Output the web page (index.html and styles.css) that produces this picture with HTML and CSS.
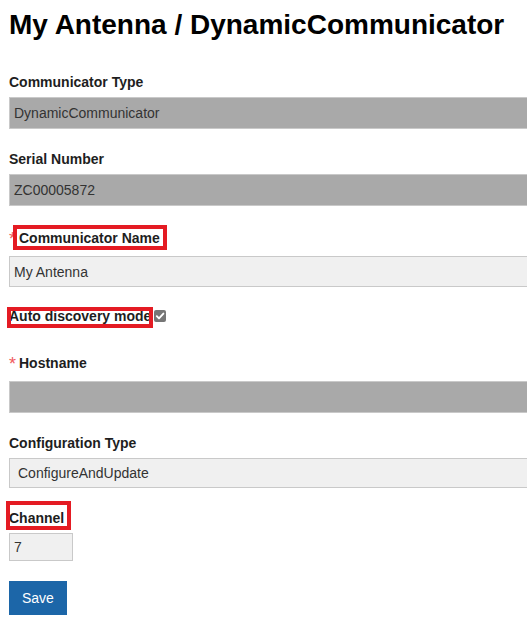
FILE: index.html
```html
<!DOCTYPE html>
<html lang="en">
<head>
<meta charset="utf-8">
<title>My Antenna / DynamicCommunicator</title>
<link rel="stylesheet" href="styles.css">
</head>
<body>
<div class="page">
  <h1 class="title">My Antenna / DynamicCommunicator</h1>
  <form class="form">
    <div class="field field-first">
      <label class="label">Communicator Type</label>
      <input class="input input-locked" type="text" value="DynamicCommunicator" readonly>
    </div>
    <div class="field">
      <label class="label">Serial Number</label>
      <input class="input input-locked" type="text" value="ZC00005872" readonly>
    </div>
    <div class="field field-req">
      <label class="label"><span class="star">*</span><span class="mark mark-name">Communicator Name</span></label>
      <input class="input input-short" type="text" value="My Antenna">
    </div>
    <div class="field field-check">
      <label class="label"><span class="mark mark-auto">Auto discovery mode</span><span class="checkbox" role="checkbox" aria-checked="true"><svg viewBox="0 0 12 12" width="12" height="12"><path d="M2.8 6.2 L5 8.4 L9.4 3.6" fill="none" stroke="#fff" stroke-width="1.9" stroke-linecap="round" stroke-linejoin="round"/></svg></span></label>
    </div>
    <div class="field field-req field-host">
      <label class="label"><span class="star">*</span>Hostname</label>
      <input class="input input-locked" type="text" value="" readonly>
    </div>
    <div class="field">
      <label class="label">Configuration Type</label>
      <select class="input select">
        <option>ConfigureAndUpdate</option>
      </select>
    </div>
    <div class="field">
      <label class="label"><span class="mark mark-channel">Channel</span></label>
      <input class="input input-channel" type="text" value="7">
    </div>
    <button class="btn" type="button">Save</button>
  </form>
</div>
</body>
</html>
```

FILE: styles.css
```css
html, body {
  margin: 0;
  padding: 0;
  background: #fff;
  overflow: hidden;
}

body {
  font-family: "Liberation Sans", Arial, sans-serif;
  font-size: 14px;
  color: #1e1e1e;
}

.page {
  padding-left: 9px;
  height: 625px;
  overflow: hidden;
}

.title {
  margin: 9px 0 0;
  font-size: 28px;
  line-height: 32px;
  font-weight: bold;
  color: #000;
  white-space: nowrap;
}

.form {
  display: flex;
  flex-direction: column;
  align-items: flex-start;
  margin: 0;
}

.field {
  display: flex;
  flex-direction: column;
  align-items: flex-start;
  margin-top: 22px;
}

.field-first {
  margin-top: 33px;
}

.label {
  display: block;
  font-weight: bold;
  line-height: 16px;
  margin-bottom: 7px;
  white-space: nowrap;
}

.field-req .label {
  padding-top: 2px;
  margin-bottom: 10px;
}

.field-check {
  margin-top: 21px;
}

.field-check .label {
  margin-bottom: 0;
}

.field-host {
  margin-top: 29px;
}

.star {
  display: inline-block;
  width: 10px;
  height: 16px;
  font-size: 18px;
  line-height: 18px;
  vertical-align: top;
  font-weight: normal;
  color: #f05a5e;
}

.mark {
  position: relative;
}

.mark::after {
  content: "";
  position: absolute;
  border: 4px solid #e41b23;
  pointer-events: none;
}

.mark-name::after {
  left: -6px;
  right: -7px;
  top: -5px;
  bottom: -4px;
}

.mark-auto::after {
  left: -2px;
  right: -2px;
  top: -1px;
  bottom: -4px;
}

.mark-channel::after {
  left: -3px;
  right: -7px;
  top: -9px;
  bottom: -4px;
}

.checkbox {
  display: inline-block;
  width: 12px;
  height: 12px;
  margin-left: 3px;
  vertical-align: -1px;
  background: #767676;
  border-radius: 2px;
}

.checkbox svg {
  display: block;
}

.input {
  box-sizing: border-box;
  width: 560px;
  height: 32px;
  margin: 0;
  padding: 0 4px;
  border: 1px solid #c9c9c9;
  border-radius: 0;
  background: #f0f0f0;
  font-family: "Liberation Sans", Arial, sans-serif;
  font-size: 14px;
  color: #333;
  outline: none;
}

.input-locked {
  background: #a9a9a9;
  color: #333;
}

.input-short {
  height: 31px;
}

.select {
  height: 30px;
  padding: 0 8px;
  -webkit-appearance: none;
  appearance: none;
}

.input-channel {
  width: 64px;
  height: 28px;
}

.btn {
  margin-top: 20px;
  height: 34px;
  padding: 0 13px;
  border: 0;
  border-radius: 0;
  background: #1c66a8;
  color: #fff;
  font-family: "Liberation Sans", Arial, sans-serif;
  font-size: 14px;
  cursor: pointer;
}
```
